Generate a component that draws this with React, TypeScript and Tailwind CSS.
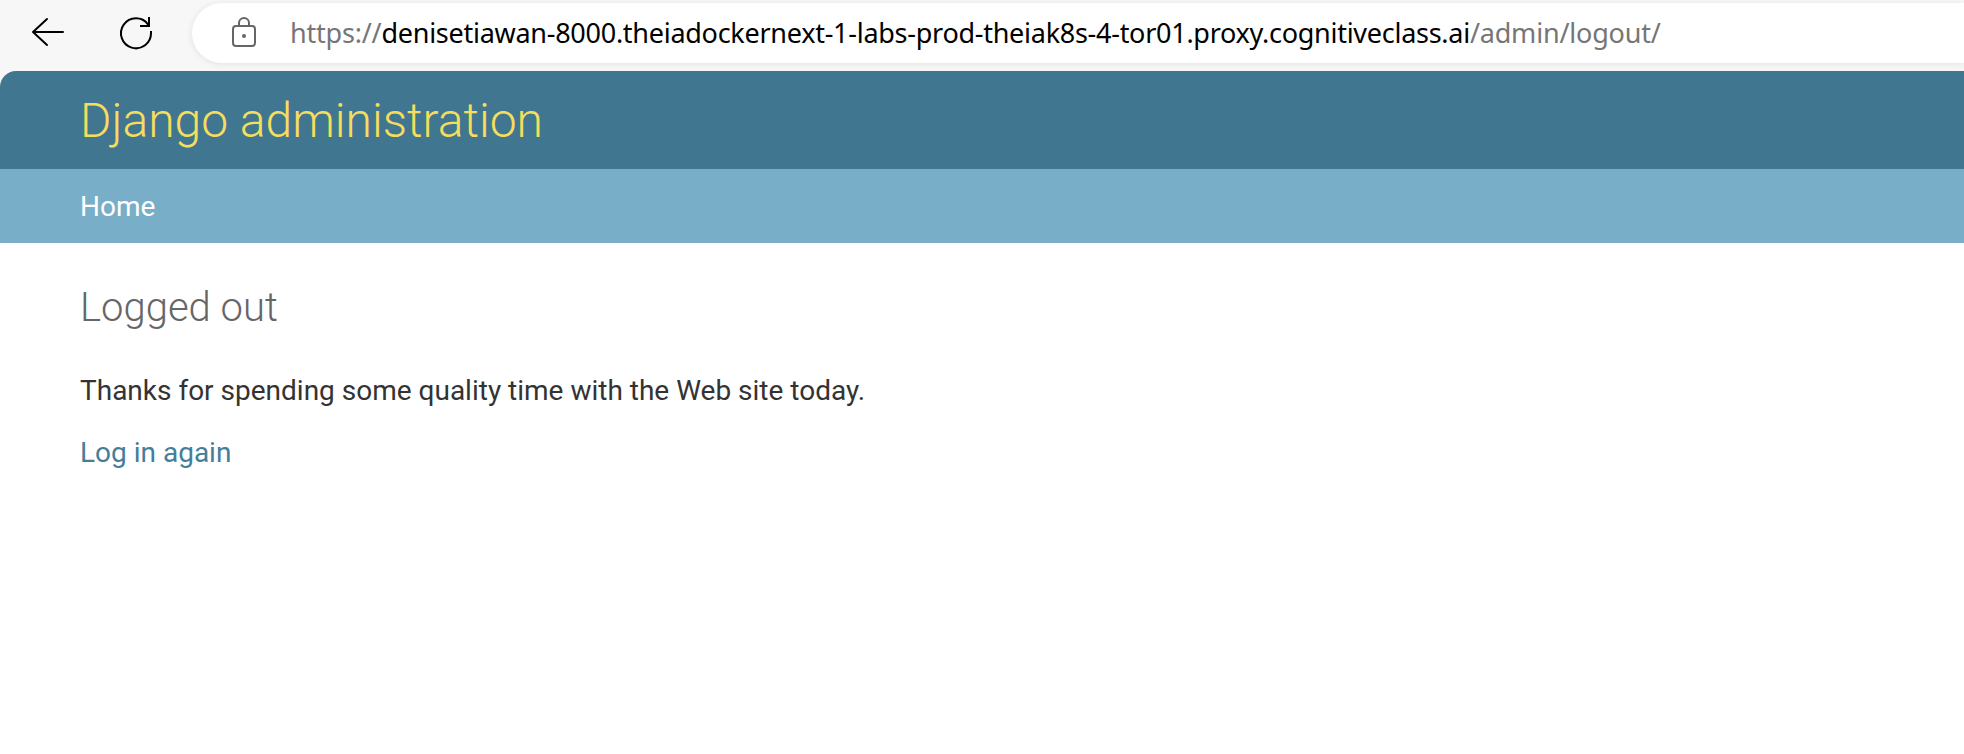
export default function App() {
  return (
    <div className="flex h-[754px] w-full flex-col overflow-hidden bg-[#f7f7f7]">
      <div className="flex h-[71px] shrink-0 items-start pt-[3px]">
        <div className="flex h-[60px] w-[192px] shrink-0 items-center">
          <svg className="ml-[30px] h-[36px] w-[36px] shrink-0" viewBox="0 0 36 36" fill="none" stroke="#000" strokeWidth="2" strokeLinecap="round" strokeLinejoin="round">
            <path d="M33 17H3M17 4L3 17L17 30" />
          </svg>
          <svg className="ml-[52px] h-[36px] w-[36px] shrink-0" viewBox="0 0 36 36" fill="none" stroke="#000" strokeWidth="2" strokeLinecap="butt" strokeLinejoin="miter">
            <path d="M33 16V18A15 15 0 1 1 30 9.300L31 11M31 2V11H22" />
          </svg>
        </div>
        <div className="flex h-[60px] grow items-center rounded-l-full bg-white shadow-[0_1px_7px_rgba(0,0,0,0.09)]">
          <svg className="ml-[38px] h-[34px] w-[28px] shrink-0" viewBox="0 0 28 34" fill="none" stroke="#666" strokeWidth="2">
            <rect x="3" y="10" width="22" height="20" rx="3" />
            <path d="M9 10V7a5 5 0 0 1 10 0v3" />
            <circle cx="14" cy="20" r="2" fill="#666" stroke="none" />
          </svg>
          <p className="ml-[32px] whitespace-nowrap pt-px font-['Noto_Sans',sans-serif] text-[27px] tracking-[-0.2px] text-[#767676]">
            https://<span className="tracking-[-0.27px] text-black">denisetiawan-8000.theiadockernext-1-labs-prod-theiak8s-4-tor01.proxy.cognitiveclass.ai</span>/admin/logout/
          </p>
        </div>
      </div>
      <div className="z-10 flex grow flex-col overflow-hidden rounded-tl-[16px] bg-white font-['Roboto',sans-serif]">
        <header className="flex h-[98px] items-center bg-[#417690] pt-[2px] pl-20">
          <h1 className="text-[48px] font-light text-[#f5dd5d]">Django administration</h1>
        </header>
        <nav className="flex h-[74px] items-center bg-[#79aec8] pt-[2px] pl-20 text-[28px] text-white">Home</nav>
        <main className="pl-20">
          <h2 className="mt-[41px] text-[40px] leading-[48px] font-light text-[#666]">Logged out</h2>
          <p className="mt-[39px] text-[28px] leading-[40px] text-[#333]">Thanks for spending some quality time with the Web site today.</p>
          <p className="mt-[22px] text-[28px] leading-[40px] text-[#447e9b]">Log in again</p>
        </main>
      </div>
    </div>
  );
}
